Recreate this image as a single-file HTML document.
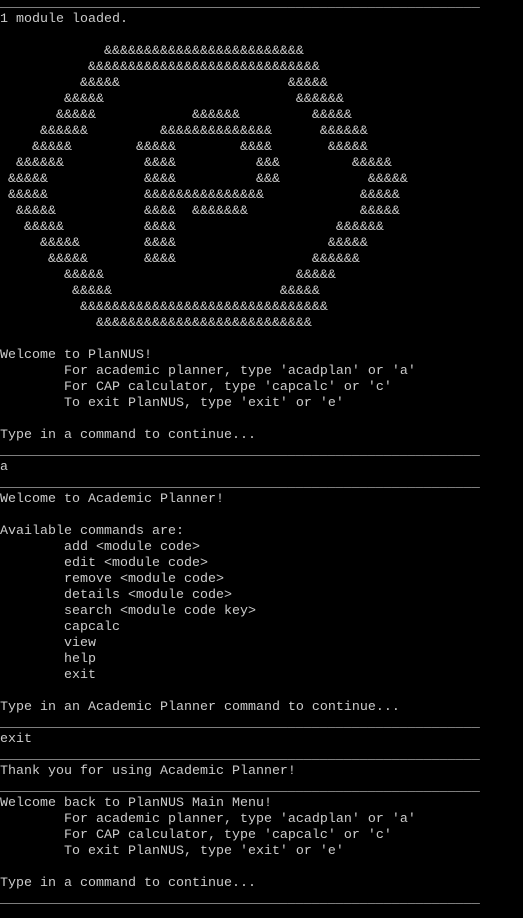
<!DOCTYPE html>
<html><head><meta charset="utf-8"><style>
html,body{margin:0;padding:0;background:#000;width:523px;height:918px;overflow:hidden}
pre{margin:0;position:absolute;left:0;top:-4px;font-family:"Liberation Mono",monospace;font-size:13.33px;line-height:16px;color:#cccccc;white-space:pre}
</style></head><body><pre>____________________________________________________________
1 module loaded.

             &amp;&amp;&amp;&amp;&amp;&amp;&amp;&amp;&amp;&amp;&amp;&amp;&amp;&amp;&amp;&amp;&amp;&amp;&amp;&amp;&amp;&amp;&amp;&amp;&amp;
           &amp;&amp;&amp;&amp;&amp;&amp;&amp;&amp;&amp;&amp;&amp;&amp;&amp;&amp;&amp;&amp;&amp;&amp;&amp;&amp;&amp;&amp;&amp;&amp;&amp;&amp;&amp;&amp;&amp;
          &amp;&amp;&amp;&amp;&amp;                     &amp;&amp;&amp;&amp;&amp;
        &amp;&amp;&amp;&amp;&amp;                        &amp;&amp;&amp;&amp;&amp;&amp;
       &amp;&amp;&amp;&amp;&amp;            &amp;&amp;&amp;&amp;&amp;&amp;         &amp;&amp;&amp;&amp;&amp;
     &amp;&amp;&amp;&amp;&amp;&amp;         &amp;&amp;&amp;&amp;&amp;&amp;&amp;&amp;&amp;&amp;&amp;&amp;&amp;&amp;      &amp;&amp;&amp;&amp;&amp;&amp;
    &amp;&amp;&amp;&amp;&amp;        &amp;&amp;&amp;&amp;&amp;        &amp;&amp;&amp;&amp;       &amp;&amp;&amp;&amp;&amp;
  &amp;&amp;&amp;&amp;&amp;&amp;          &amp;&amp;&amp;&amp;          &amp;&amp;&amp;         &amp;&amp;&amp;&amp;&amp;
 &amp;&amp;&amp;&amp;&amp;            &amp;&amp;&amp;&amp;          &amp;&amp;&amp;           &amp;&amp;&amp;&amp;&amp;
 &amp;&amp;&amp;&amp;&amp;            &amp;&amp;&amp;&amp;&amp;&amp;&amp;&amp;&amp;&amp;&amp;&amp;&amp;&amp;&amp;            &amp;&amp;&amp;&amp;&amp;
  &amp;&amp;&amp;&amp;&amp;           &amp;&amp;&amp;&amp;  &amp;&amp;&amp;&amp;&amp;&amp;&amp;              &amp;&amp;&amp;&amp;&amp;
   &amp;&amp;&amp;&amp;&amp;          &amp;&amp;&amp;&amp;                    &amp;&amp;&amp;&amp;&amp;&amp;
     &amp;&amp;&amp;&amp;&amp;        &amp;&amp;&amp;&amp;                   &amp;&amp;&amp;&amp;&amp;
      &amp;&amp;&amp;&amp;&amp;       &amp;&amp;&amp;&amp;                 &amp;&amp;&amp;&amp;&amp;&amp;
        &amp;&amp;&amp;&amp;&amp;                        &amp;&amp;&amp;&amp;&amp;
         &amp;&amp;&amp;&amp;&amp;                     &amp;&amp;&amp;&amp;&amp;
          &amp;&amp;&amp;&amp;&amp;&amp;&amp;&amp;&amp;&amp;&amp;&amp;&amp;&amp;&amp;&amp;&amp;&amp;&amp;&amp;&amp;&amp;&amp;&amp;&amp;&amp;&amp;&amp;&amp;&amp;&amp;
            &amp;&amp;&amp;&amp;&amp;&amp;&amp;&amp;&amp;&amp;&amp;&amp;&amp;&amp;&amp;&amp;&amp;&amp;&amp;&amp;&amp;&amp;&amp;&amp;&amp;&amp;&amp;

Welcome to PlanNUS!
        For academic planner, type 'acadplan' or 'a'
        For CAP calculator, type 'capcalc' or 'c'
        To exit PlanNUS, type 'exit' or 'e'

Type in a command to continue...
____________________________________________________________
a
____________________________________________________________
Welcome to Academic Planner!

Available commands are:
        add &lt;module code&gt;
        edit &lt;module code&gt;
        remove &lt;module code&gt;
        details &lt;module code&gt;
        search &lt;module code key&gt;
        capcalc
        view
        help
        exit

Type in an Academic Planner command to continue...
____________________________________________________________
exit
____________________________________________________________
Thank you for using Academic Planner!
____________________________________________________________
Welcome back to PlanNUS Main Menu!
        For academic planner, type 'acadplan' or 'a'
        For CAP calculator, type 'capcalc' or 'c'
        To exit PlanNUS, type 'exit' or 'e'

Type in a command to continue...
____________________________________________________________
</pre></body></html>
